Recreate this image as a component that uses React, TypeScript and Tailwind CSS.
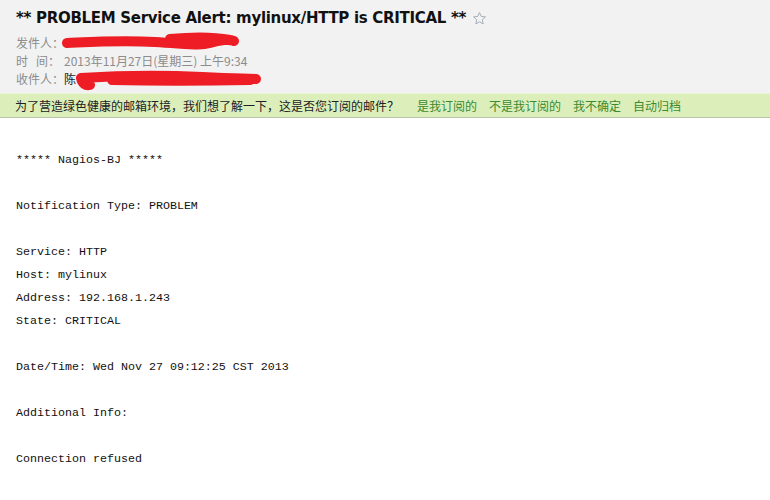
import React from 'react'

const bodyLines = [
  '***** Nagios-BJ *****',
  '',
  'Notification Type: PROBLEM',
  '',
  'Service: HTTP',
  'Host: mylinux',
  'Address: 192.168.1.243',
  'State: CRITICAL',
  '',
  'Date/Time: Wed Nov 27 09:12:25 CST 2013',
  '',
  'Additional Info:',
  '',
  'Connection refused',
]

const cjk = { fontFamily: '"Noto Sans CJK SC", "Liberation Sans", sans-serif' }

// red marker strokes that hide the addresses
function Scribble({ d, w, h, className }: { d: string; w: number; h: number; className: string }) {
  return (
    <svg className={className} width={w} height={h} viewBox={`0 0 ${w} ${h}`} fill="none">
      <path d={d} stroke="#ee1c24" strokeWidth="10" strokeLinecap="round" strokeLinejoin="round" />
    </svg>
  )
}

export default function App() {
  return (
    <div className="w-[770px] h-[500px] bg-white overflow-hidden">
      <div className="bg-[#f2f2f2] pl-[16px] pt-[7px] h-[93px]">
        <div className="flex items-center gap-[6px] h-[22px]">
          <span className="text-[15px] font-bold text-[#111] font-['DejaVu_Sans',sans-serif] tracking-[-0.3px]">
            ** PROBLEM Service Alert: mylinux/HTTP is CRITICAL **
          </span>
          <svg width="15" height="15" viewBox="0 0 24 24" fill="none" stroke="#9aa3ad" strokeWidth="1.4" strokeLinejoin="round">
            <path d="M12 2.5l2.9 6.2 6.6.7-5 4.6 1.4 6.6L12 17.3l-5.9 3.3 1.4-6.6-5-4.6 6.6-.7z" />
          </svg>
        </div>
        <div className="mt-[5px] text-[12px] leading-[18px] text-[#8c8c8c]" style={cjk}>
          <div className="relative">
            发件人：
            <Scribble
              className="absolute left-[44px] top-[-3px]"
              w={182}
              h={22}
              d="M7 12 C30 11, 60 9, 95 11 S140 15, 150 12 C160 9, 170 8, 174 10 M110 8 C130 6, 150 5, 170 9"
            />
          </div>
          <div className="flex">
            <span className="w-[48px]">时&nbsp;&nbsp;&nbsp;间：</span>
            <span>2013年11月27日(星期三) 上午9:34</span>
          </div>
          <div className="relative">
            收件人：<span className="text-[#222]">陈</span>
            <span className="ml-[174px]">&gt;</span>
            <Scribble
              className="absolute left-[56px] top-[-3px]"
              w={192}
              h={26}
              d="M9 11 C10 17, 14 19, 18 18 M9 11 C40 9, 90 8, 130 10 S172 11, 184 12 M40 13 C80 14, 130 14, 178 13"
            />
          </div>
        </div>
      </div>
      <div className="h-[25px] bg-[#dcefbb] border-t border-[#e9f5d6] border-b border-b-[#b9c4aa] flex items-center pl-[15px] text-[12px] text-[#222]" style={cjk}>
        <span>为了营造绿色健康的邮箱环境，我们想了解一下，这是否您订阅的邮件？</span>
        <div className="flex gap-[12px] ml-[18px] text-[#3b8a2f]">
          <span>是我订阅的</span>
          <span>不是我订阅的</span>
          <span>我不确定</span>
          <span>自动归档</span>
        </div>
      </div>
      <div className="pl-[16px] pt-[31px] text-[11.66px] leading-[23px] text-[#111] font-['Liberation_Mono',monospace] whitespace-pre">
        {bodyLines.map((line, i) => (
          <div key={i} className="h-[23px]">{line}</div>
        ))}
      </div>
    </div>
  )
}
